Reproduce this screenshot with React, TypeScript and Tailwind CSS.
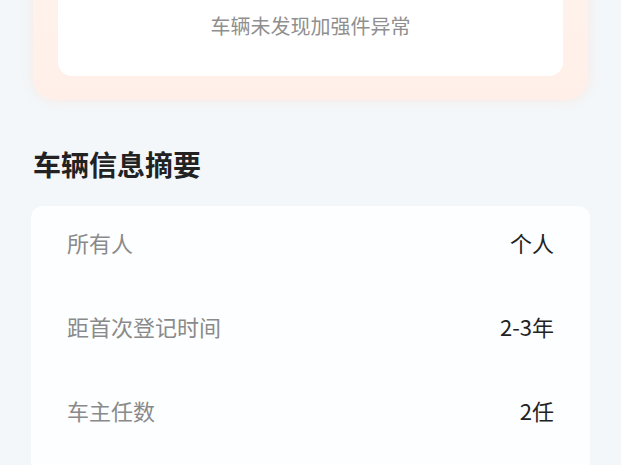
const rows = [
  { label: '所有人', value: '个人' },
  { label: '距首次登记时间', value: '2-3年' },
  { label: '车主任数', value: '2任' },
];

export default function App() {
  return (
    <div
      className="h-[465px] w-[621px] overflow-hidden bg-[#f3f7fa]"
      style={{ fontFamily: '"Noto Sans CJK SC", "Noto Sans", sans-serif' }}
    >
      {/* reinforcement check card, scrolled partly out of view */}
      <div className="mx-[33px] -mt-[60px] rounded-b-[22px] bg-gradient-to-b from-[#fff4ee] to-[#ffefe8] px-[25px] pb-[24px] pt-[60px] shadow-[0_0_14px_rgba(255,215,195,0.4)]">
        <div className="flex h-[76px] items-start justify-center rounded-b-[14px] bg-white pt-[12px]">
          <span className="text-[20px] leading-[28px] text-[#8f8f8f]">车辆未发现加强件异常</span>
        </div>
      </div>

      <h2 className="ml-[33px] mt-[44px] text-[28px] font-bold leading-[40px] text-[#222]">车辆信息摘要</h2>

      <div className="mx-[31px] mt-[22px] h-[300px] rounded-t-[12px] bg-[#fcfeff] px-[36px] pt-[15px]">
        {rows.map((r) => (
          <div key={r.label} className="flex h-[84px] items-start justify-between pt-[4px]">
            <span className="text-[22px] leading-[34px] text-[#8a8a8a]">{r.label}</span>
            <span className="text-[22px] leading-[34px] text-[#222]">{r.value}</span>
          </div>
        ))}
      </div>
    </div>
  );
}
